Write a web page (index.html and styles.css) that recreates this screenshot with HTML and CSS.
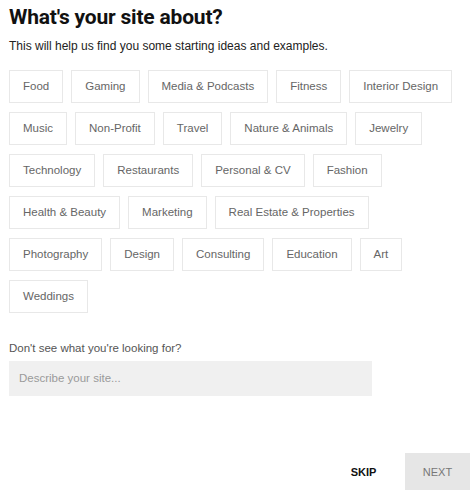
FILE: index.html
```html
<!DOCTYPE html>
<html>
<head>
<meta charset="utf-8">
<link rel="stylesheet" href="styles.css">
</head>
<body>
<div class="page">
  <h1 class="title">What's your site about?</h1>
  <p class="subtitle">This will help us find you some starting ideas and examples.</p>
  <div class="tags">
    <span class="tag">Food</span>
    <span class="tag">Gaming</span>
    <span class="tag">Media &amp; Podcasts</span>
    <span class="tag">Fitness</span>
    <span class="tag">Interior Design</span>
    <span class="tag">Music</span>
    <span class="tag">Non-Profit</span>
    <span class="tag">Travel</span>
    <span class="tag">Nature &amp; Animals</span>
    <span class="tag">Jewelry</span>
    <span class="tag">Technology</span>
    <span class="tag">Restaurants</span>
    <span class="tag">Personal &amp; CV</span>
    <span class="tag">Fashion</span>
    <span class="tag">Health &amp; Beauty</span>
    <span class="tag">Marketing</span>
    <span class="tag">Real Estate &amp; Properties</span>
    <span class="tag">Photography</span>
    <span class="tag">Design</span>
    <span class="tag">Consulting</span>
    <span class="tag">Education</span>
    <span class="tag">Art</span>
    <span class="tag">Weddings</span>
  </div>
  <label class="label">Don't see what you're looking for?</label>
  <div class="input">Describe your site...</div>
  <div class="actions">
    <button class="btn skip">SKIP</button>
    <button class="btn next">NEXT</button>
  </div>
</div>
</body>
</html>
```

FILE: styles.css
```css
* { box-sizing: border-box; }
html, body { margin: 0; padding: 0; background: #fff; }
body { font-family: "Liberation Sans", Arial, sans-serif; color: #111; }
.page { padding: 4px 0 0 9px; width: 473px; height: 492px; display: flex; flex-direction: column; }
.title { margin: 0; font-family: Roboto, "Liberation Sans", sans-serif; font-size: 21px; font-weight: bold; line-height: 26px; color: #111; letter-spacing: -0.2px; }
.subtitle { margin: 9px 0 0; font-size: 12px; line-height: 14px; color: #222; }
.tags { display: flex; flex-wrap: wrap; gap: 9px 8px; margin-top: 17px; width: 455px; }
.tag { height: 33px; padding: 0 13px; border: 1px solid #e8e8e8; font-size: 11.5px; line-height: 31px; color: #666; white-space: nowrap; }
.label { margin-top: 28px; font-size: 11.5px; line-height: 14px; color: #555; }
.input { margin-top: 6px; width: 363px; height: 35px; background: #f0f0f0; padding: 0 10px; font-size: 11.5px; line-height: 35px; color: #9a9a9a; }
.actions { margin-top: auto; display: flex; justify-content: flex-end; padding-right: 3px; padding-bottom: 2px; }
.btn { border: 0; font-family: inherit; font-size: 11px; height: 37px; cursor: pointer; }
.skip { background: transparent; color: #111; width: 65px; margin-right: 9px; font-weight: 600; }
.next { background: #e6e6e6; color: #777; width: 65px; }
```
